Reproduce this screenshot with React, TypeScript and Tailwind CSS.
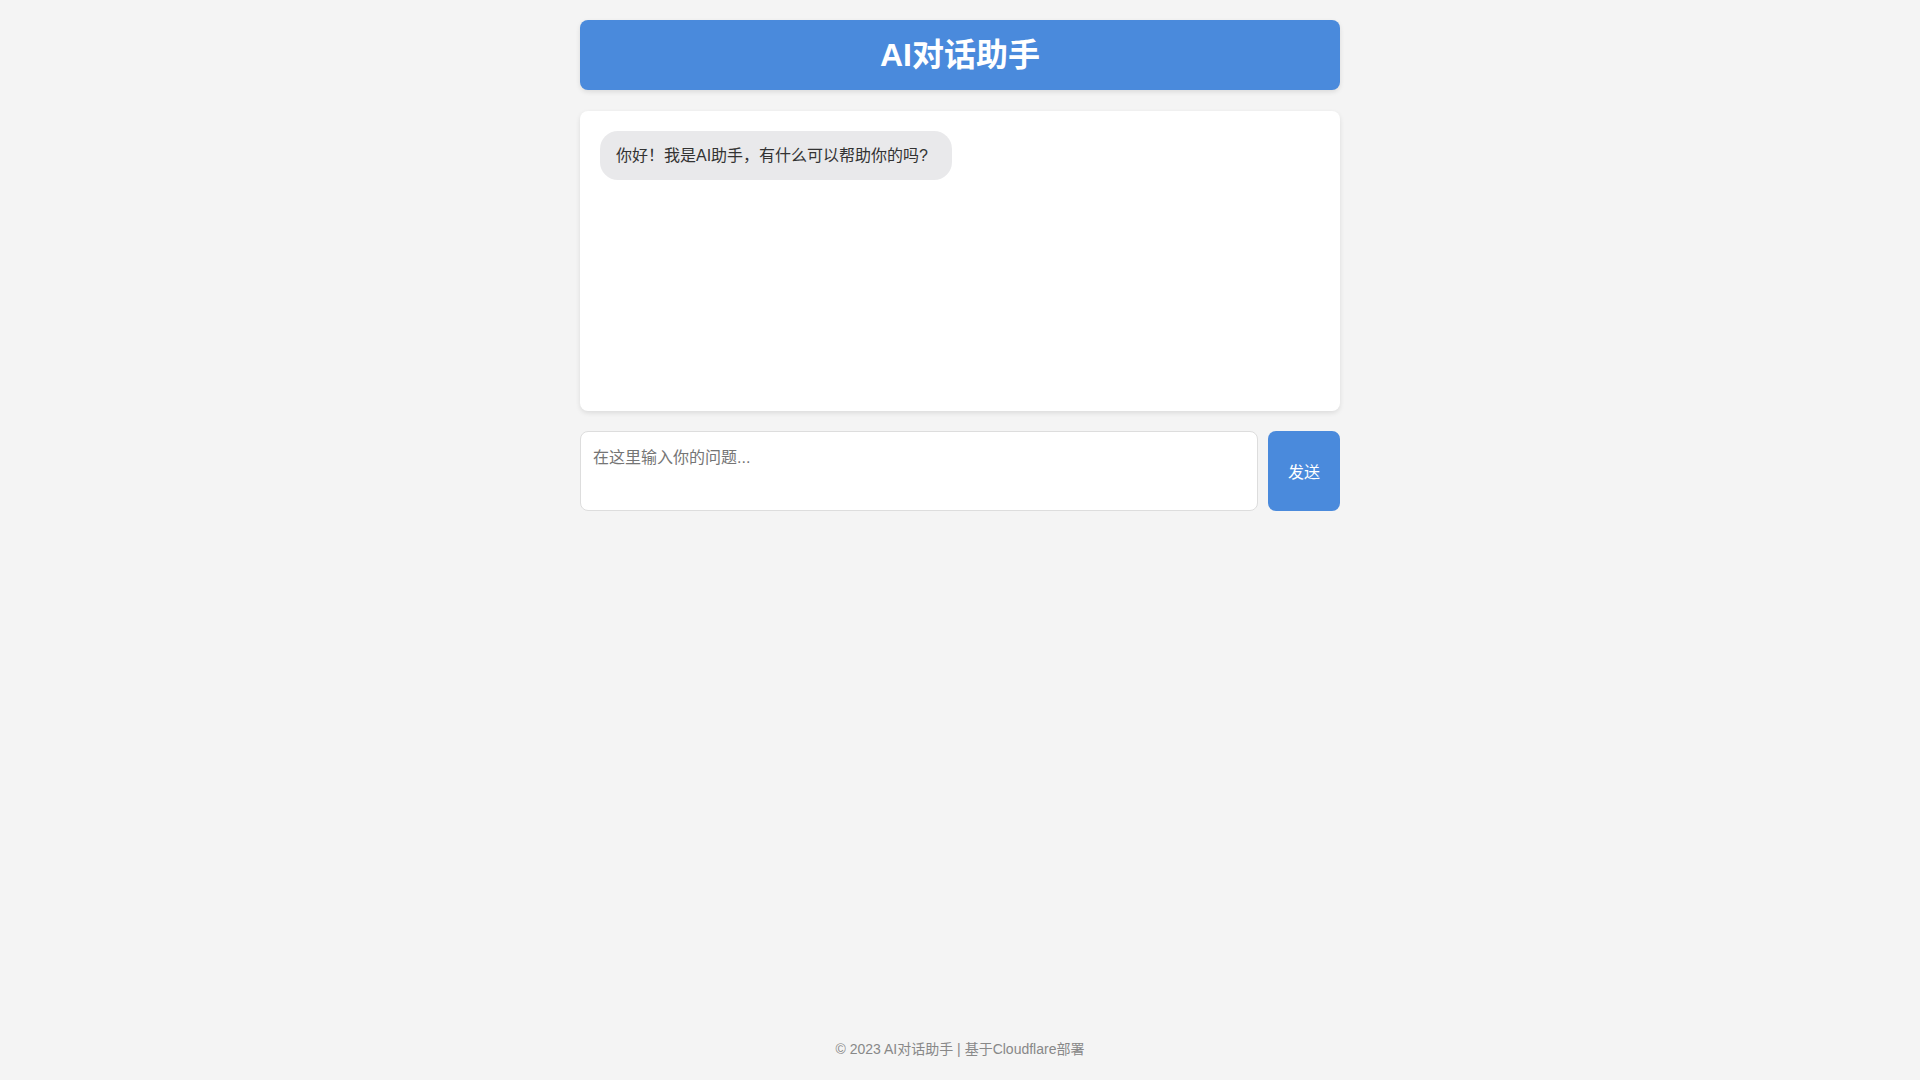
import { useState } from "react";

export default function App() {
  const [input, setInput] = useState("");

  return (
    <div
      className="min-h-screen bg-[#f4f4f4] text-[#333]"
      style={{ fontFamily: '"Liberation Sans", Arial, "Noto Sans CJK SC", sans-serif' }}
    >
      <div className="mx-auto flex min-h-screen max-w-[800px] flex-col p-5">
        {/* Header */}
        <header className="flex h-[70px] items-center justify-center rounded-lg bg-[#4a8adc] text-white shadow-[0_2px_5px_rgba(0,0,0,0.1)]">
          <h1 className="text-[32px] font-bold leading-none">AI对话助手</h1>
        </header>

        {/* Chat */}
        <div className="mt-[21px] h-[300px] overflow-y-auto rounded-lg bg-white p-5 shadow-[0_2px_5px_rgba(0,0,0,0.1)]">
          <div className="inline-block max-w-[80%] rounded-[18px] bg-[#e9e9eb] py-3 pl-4 pr-6 text-base leading-[25px] text-[#333]">
            你好！我是AI助手，有什么可以帮助你的吗?
          </div>
        </div>

        {/* Input */}
        <div className="mt-5 flex gap-2.5">
          <textarea
            value={input}
            onChange={(e) => setInput(e.target.value)}
            placeholder="在这里输入你的问题..."
            className="h-[80px] flex-1 resize-none rounded-lg border border-[#ddd] bg-white px-3 pb-3 pt-[14px] text-base leading-6 outline-none placeholder:text-[#757575]"
          />
          <button className="rounded-lg bg-[#4a8adc] px-5 pt-1 text-base text-white">发送</button>
        </div>

        {/* Footer */}
        <footer className="-mb-px mt-auto text-center text-sm leading-6 text-[#888]">
          © 2023 AI对话助手 | 基于Cloudflare部署
        </footer>
      </div>
    </div>
  );
}
